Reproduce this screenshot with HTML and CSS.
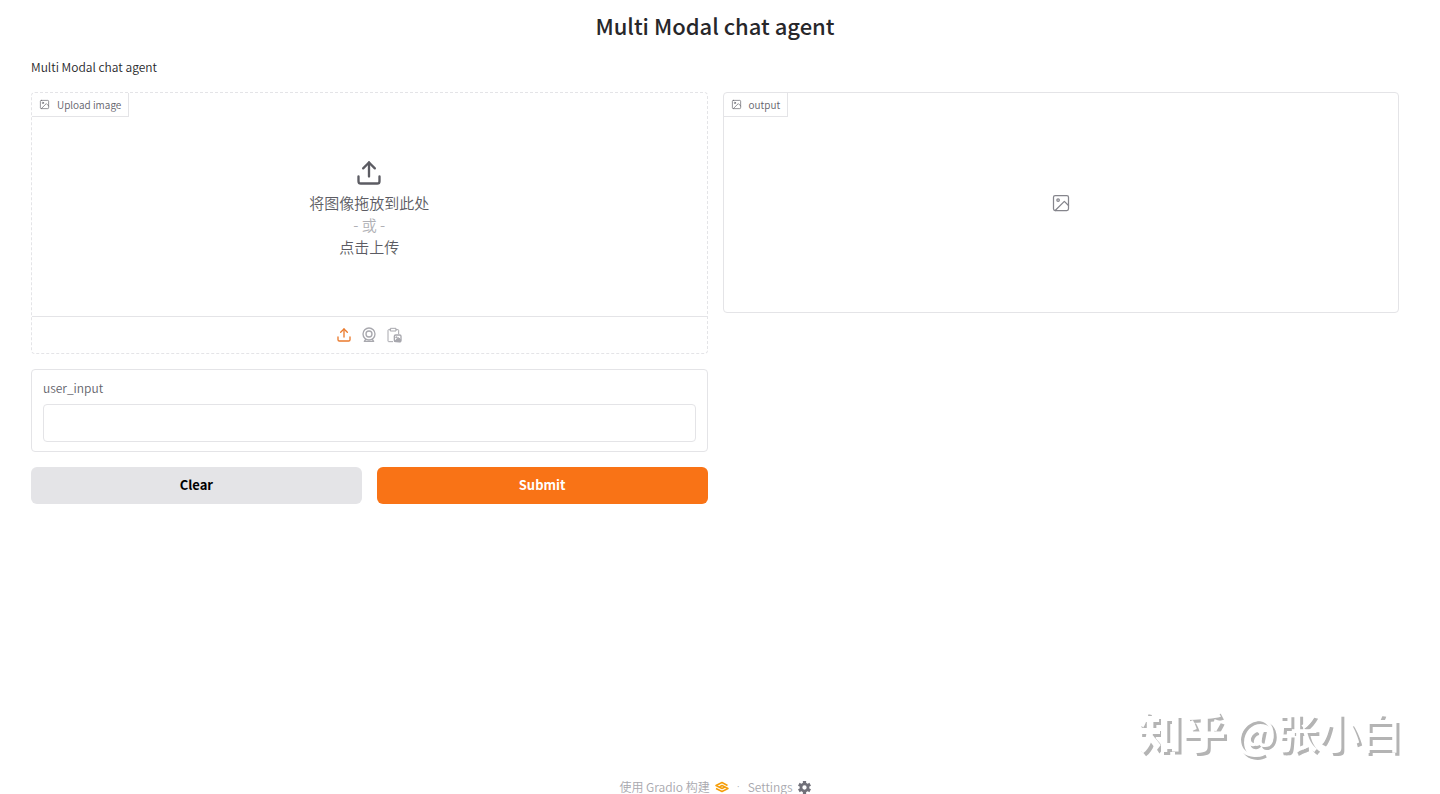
FILE: index.html
```html
<!DOCTYPE html>
<html lang="zh-CN">

<head>
    <meta charset="UTF-8">
    <meta name="viewport" content="width=device-width, initial-scale=1.0">
    <title>Multi Modal chat agent</title>
    <link rel="stylesheet" href="styles.css">
</head>

<body>
    <div class="app">
        <h1>Multi Modal chat agent</h1>
        <p class="description">Multi Modal chat agent</p>

        <main class="columns">
            <form class="column">
                <section class="block upload-block">
                    <div class="block-label">
                        <svg class="label-icon" viewBox="0 0 24 24" fill="none" stroke="currentColor" stroke-width="1.5" stroke-linecap="round" stroke-linejoin="round">
                            <rect x="3" y="3" width="18" height="18" rx="2"></rect>
                            <circle cx="8.5" cy="8.5" r="1.5"></circle>
                            <polyline points="21 15 16 10 5 21"></polyline>
                        </svg>
                        <span>Upload image</span>
                    </div>
                    <button type="button" class="drop-area">
                        <svg class="drop-icon" viewBox="0 0 24 24" fill="none" stroke="currentColor" stroke-width="2" stroke-linecap="round" stroke-linejoin="round">
                            <path d="M21 15v4a2 2 0 0 1-2 2H5a2 2 0 0 1-2-2v-4"></path>
                            <polyline points="17 8 12 3 7 8"></polyline>
                            <line x1="12" y1="3" x2="12" y2="15"></line>
                        </svg>
                        <span>将图像拖放到此处</span>
                        <span class="or">- 或 -</span>
                        <span>点击上传</span>
                    </button>
                    <div class="source-bar">
                        <button type="button" class="source-btn selected" aria-label="Upload file">
                            <svg viewBox="0 0 24 24" fill="none" stroke="currentColor" stroke-width="2" stroke-linecap="round" stroke-linejoin="round">
                                <path d="M21 15v4a2 2 0 0 1-2 2H5a2 2 0 0 1-2-2v-4"></path>
                                <polyline points="17 8 12 3 7 8"></polyline>
                                <line x1="12" y1="3" x2="12" y2="15"></line>
                            </svg>
                        </button>
                        <button type="button" class="source-btn" aria-label="Capture from camera">
                            <svg viewBox="0 0 24 24" fill="none" stroke="currentColor" stroke-width="2" stroke-linecap="round" stroke-linejoin="round">
                                <circle cx="12" cy="10.5" r="9"></circle>
                                <circle cx="12" cy="10.5" r="4.5"></circle>
                                <path d="M7 18.5l-2 3h14l-2-3"></path>
                            </svg>
                        </button>
                        <button type="button" class="source-btn" aria-label="Paste from clipboard">
                            <svg viewBox="0 0 24 24" fill="none" stroke="currentColor" stroke-width="1.5" stroke-linecap="round" stroke-linejoin="round">
                                <path d="M7 4H4a1 1 0 0 0-1 1v16a1 1 0 0 0 1 1h6"></path>
                                <path d="M15 4h3a1 1 0 0 1 1 1v5"></path>
                                <path d="M7 2h8v4H7z"></path>
                                <rect x="12.5" y="12" width="10" height="10" rx="2" stroke-width="2"></rect>
                                <circle cx="15.5" cy="15.5" r="1"></circle>
                                <path d="M13 21l6-5 3 3v3z" fill="currentColor"></path>
                            </svg>
                        </button>
                    </div>
                </section>

                <section class="block text-block">
                    <label for="user-input">user_input</label>
                    <input type="text" id="user-input" name="user_input">
                </section>

                <div class="button-row">
                    <button type="reset" class="btn clear-btn">Clear</button>
                    <button type="button" class="btn submit-btn">Submit</button>
                </div>
            </form>

            <div class="column">
                <section class="block output-block">
                    <div class="block-label">
                        <svg class="label-icon" viewBox="0 0 24 24" fill="none" stroke="currentColor" stroke-width="1.5" stroke-linecap="round" stroke-linejoin="round">
                            <rect x="3" y="3" width="18" height="18" rx="2"></rect>
                            <circle cx="8.5" cy="8.5" r="1.5"></circle>
                            <polyline points="21 15 16 10 5 21"></polyline>
                        </svg>
                        <span>output</span>
                    </div>
                    <svg class="empty-icon" viewBox="0 0 24 24" fill="none" stroke="currentColor" stroke-width="1.5" stroke-linecap="round" stroke-linejoin="round">
                        <rect x="3" y="3" width="18" height="18" rx="2"></rect>
                        <circle cx="8.5" cy="8.5" r="1.5"></circle>
                        <polyline points="21 15 16 10 5 21"></polyline>
                    </svg>
                </section>
            </div>
        </main>

        <footer>
            <a href="#">
                使用 Gradio 构建
                <svg class="gradio-logo" viewBox="0 0 28 24" fill="none" stroke="#f59e0b" stroke-width="3" stroke-linejoin="round">
                    <path d="M25 9L14 3 2 9l12 6 6-3"></path>
                    <path d="M2 15l12 6 12-6-12-6-5 3"></path>
                </svg>
            </a>
            <span class="dot">·</span>
            <button type="button" class="settings-btn">
                Settings
                <svg class="gear" viewBox="0 0 24 24" fill="none" stroke="currentColor">
                    <circle cx="12" cy="12" r="6.5" stroke-width="5"></circle>
                    <path d="M12 0v5M12 19v5M1.500 6l4.500 2.500M18 15.500l4.500 2.500M1.500 18l4.500-2.500M18 8.500l4.500-2.500" stroke-width="6"></path>
                </svg>
            </button>
        </footer>
    </div>

    <div class="watermark"><span class="brand">知乎</span> @张小白</div>
</body>

</html>
```
FILE: styles.css
```css
* {
    box-sizing: border-box;
}

body {
    margin: 0;
    font-family: "Noto Sans CJK SC", sans-serif;
    font-size: 12px;
    font-weight: 350;
    line-height: 20px;
    color: #27272a;
    background-color: #ffffff;
}

.app {
    display: flex;
    flex-direction: column;
    min-height: 100vh;
    padding: 7px 41px 0 31px;
}

h1 {
    margin: 0 0 14px;
    font-size: 22px;
    font-weight: 500;
    line-height: 36px;
    text-align: center;
}

.description {
    margin: 0 0 15px;
}

.columns {
    display: grid;
    grid-template-columns: 1fr 1fr;
    gap: 15px;
    flex-grow: 1;
    align-items: start;
}

.column {
    display: flex;
    flex-direction: column;
    gap: 15px;
}

.block {
    display: flex;
    flex-direction: column;
    border: 1px solid #e4e4e7;
    border-radius: 4px;
}

.upload-block {
    position: relative;
    height: 262px;
    border-style: dashed;
}

.output-block {
    position: relative;
    height: 221px;
    align-items: center;
    justify-content: center;
    color: #85858c;
}

.block-label {
    position: absolute;
    top: 0;
    left: 0;
    display: flex;
    align-items: center;
    gap: 7px;
    height: 24px;
    padding: 0 7px;
    border: solid #e4e4e7;
    border-width: 0 1px 1px 0;
    font-size: 10px;
    color: #63636b;
}

.label-icon {
    width: 11px;
    height: 11px;
}

.empty-icon {
    width: 20px;
    height: 20px;
}

button {
    padding: 0;
    border: none;
    background: none;
    font: inherit;
    color: inherit;
    cursor: pointer;
}

.drop-area {
    display: flex;
    flex-direction: column;
    flex-grow: 1;
    align-items: center;
    justify-content: center;
    padding-top: 8px;
    font-size: 15px;
    line-height: 22px;
    color: #5c5c63;
}

.drop-icon {
    width: 28px;
    height: 28px;
    margin-bottom: 5px;
}

.or {
    color: #b0b0b5;
}

.source-bar {
    display: flex;
    align-items: center;
    justify-content: center;
    gap: 9px;
    height: 37px;
    border-top: 1px solid #e4e4e7;
    color: #a8a8ae;
}

.source-btn {
    width: 16px;
    height: 16px;
}

.source-btn svg {
    display: block;
}

.selected {
    color: #ea7a2c;
}

.text-block {
    padding: 8px 11px 9px;
}

.text-block label {
    margin-bottom: 6px;
    color: #63636b;
}

.text-block input {
    width: 100%;
    height: 38px;
    padding: 8px;
    border: 1px solid #e4e4e7;
    border-radius: 4px;
    font: inherit;
}

.button-row {
    display: grid;
    grid-template-columns: 1fr 1fr;
    gap: 15px;
}

.btn {
    height: 37px;
    padding-bottom: 2px;
    border-radius: 6px;
    font-size: 13px;
    font-weight: 600;
}

.clear-btn {
    background-color: #e4e4e7;
    color: #000000;
}

.submit-btn {
    background-color: #f97316;
    color: #ffffff;
}

footer {
    display: flex;
    justify-content: center;
    gap: 8px;
    line-height: 14px;
    color: #a8a8ae;
}

footer a,
.settings-btn {
    display: flex;
    align-items: center;
    gap: 5px;
    color: inherit;
    text-decoration: none;
}

.dot {
    font-family: "Noto Sans", sans-serif;
}

.gradio-logo {
    width: 14px;
    height: 12px;
}

.gear {
    width: 13px;
    height: 13px;
    color: #71717a;
}

.watermark {
    position: fixed;
    right: 38px;
    bottom: 33px;
    font-size: 42px;
    font-weight: 500;
    line-height: 60px;
    color: #ffffff;
    text-shadow: 3px 3px 0 #b4b4b4;
    pointer-events: none;
}

.brand {
    font-size: 44px;
    font-weight: 900;
}
```
